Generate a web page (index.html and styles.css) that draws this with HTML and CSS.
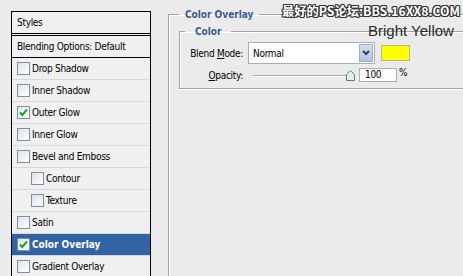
FILE: index.html
```html
<!DOCTYPE html>
<html lang="en">
<head>
    <meta charset="UTF-8">
    <title>Layer Style - Color Overlay</title>
    <link rel="stylesheet" href="styles.css">
</head>
<body>
    <div class="dialog">
        <!-- Styles list on the left -->
        <div class="styles-list">
            <div class="list-head">Styles</div>
            <div class="list-row blending">Blending Options: Default</div>
            <div class="list-row"><span class="check"></span>Drop Shadow</div>
            <div class="list-row"><span class="check"></span>Inner Shadow</div>
            <div class="list-row"><span class="check"><svg viewBox="0 0 11 11"><path d="M2 5.5 L4.3 8 L9 2.5" /></svg></span>Outer Glow</div>
            <div class="list-row"><span class="check"></span>Inner Glow</div>
            <div class="list-row"><span class="check"></span>Bevel and Emboss</div>
            <div class="list-row sub"><span class="check"></span>Contour</div>
            <div class="list-row sub"><span class="check"></span>Texture</div>
            <div class="list-row"><span class="check"></span>Satin</div>
            <div class="list-row selected"><span class="check"><svg viewBox="0 0 11 11"><path d="M2 5.5 L4.3 8 L9 2.5" /></svg></span>Color Overlay</div>
            <div class="list-row"><span class="check"></span>Gradient Overlay</div>
        </div>

        <!-- Settings pane -->
        <div class="settings">
            <fieldset class="group outer">
                <legend>Color Overlay</legend>
                <fieldset class="group inner">
                    <legend>Color</legend>
                    <div class="field-row">
                        <label class="field-label">Blend <u>M</u>ode:</label>
                        <div class="select">
                            <span class="select-value">Normal</span>
                            <span class="select-btn">
                                <svg viewBox="0 0 12 16"><path d="M3 6 L6 9 L9 6" /></svg>
                            </span>
                        </div>
                        <span class="swatch"></span>
                    </div>
                    <div class="field-row second">
                        <label class="field-label"><u>O</u>pacity:</label>
                        <div class="slider">
                            <span class="track"></span>
                            <svg class="thumb" viewBox="0 0 9 11"><path d="M4.5 0.5 L8.5 4.5 V10.5 H0.5 V4.5 Z" /></svg>
                        </div>
                        <span class="num">100</span>
                        <span class="unit">%</span>
                    </div>
                </fieldset>
            </fieldset>
        </div>
    </div>

    <div class="watermark">最好的PS论坛:BBS.16XX8.COM</div>
    <div class="note">Bright Yellow</div>
</body>
</html>
```

FILE: styles.css
```css
body {
    margin: 0;
    height: 276px;
    overflow: hidden;
    position: relative;
    background-color: #ebebeb;
    color: #000;
    font-family: "DejaVu Sans Condensed", "DejaVu Sans", sans-serif;
    font-size: 10px;
    letter-spacing: -0.3px;
}
.dialog {
    display: flex;
    align-items: flex-start;
    padding: 8px 0 0 11px;
}
.styles-list {
    flex: none;
    width: 138px;
    margin-top: 3px;
    border: 1px solid #000;
    background-color: #f0f0f0;
}
.list-head {
    height: 21px;
    line-height: 21px;
    padding-left: 5px;
    border-bottom: 3px double #000;
}
.list-row {
    display: flex;
    align-items: center;
    height: 21px;
    padding-left: 5px;
    border-bottom: 1px solid #dadada;
    white-space: nowrap;
}
.list-row.blending {
    border-bottom-color: #000;
}
.list-row.sub {
    padding-left: 19px;
}
.list-row.selected {
    background-color: #3163a5;
    color: #fff;
    font-weight: bold;
    letter-spacing: 0;
}
.check {
    flex: none;
    box-sizing: border-box;
    width: 13px;
    height: 13px;
    margin-right: 2px;
    border: 1px solid #7d8fa0;
    background: linear-gradient(135deg, #dde2e8, #ffffff);
}
.check svg {
    display: block;
    width: 11px;
    height: 11px;
}
.check path {
    fill: none;
    stroke: #21a121;
    stroke-width: 2;
}
.settings {
    flex: 1;
    margin-left: 17px;
}
.group {
    margin: 0;
    border: 1px solid #a3a3a3;
    box-shadow: inset 1px 1px #fff, 1px 1px #fff;
}
.group legend {
    font-weight: bold;
    color: #3b5b8d;
    line-height: 13px;
    letter-spacing: 0;
}
.group.outer {
    width: 400px;
    height: 300px;
    padding: 4px 0 0 10px;
}
.group.outer > legend {
    padding: 0 6px;
}
.group.inner {
    width: 380px;
    padding: 0 0 6px 5px;
}
.group.inner > legend {
    padding: 0 10px;
}
.field-row {
    display: flex;
    align-items: center;
    margin-top: 4px;
    white-space: nowrap;
}
.field-row.second {
    height: 14px;
    margin-top: 4px;
}
.field-label {
    width: 58px;
    margin-right: 5px;
    text-align: right;
}
.select {
    display: flex;
    justify-content: space-between;
    align-items: center;
    box-sizing: border-box;
    width: 127px;
    height: 22px;
    padding: 1px;
    border: 1px solid #a7aeb6;
    background-color: #fff;
}
.select-value {
    padding-left: 3px;
}
.select-btn {
    box-sizing: border-box;
    width: 14px;
    height: 18px;
    border: 1px solid #9aaecb;
    background: linear-gradient(#d5e0ef, #b2c4de);
}
.select-btn svg {
    display: block;
    width: 12px;
    height: 16px;
}
.select-btn path {
    fill: none;
    stroke: #2b3f63;
    stroke-width: 2;
}
.swatch {
    box-sizing: border-box;
    width: 29px;
    height: 16px;
    margin-left: 6px;
    border: 1px solid #b8b88a;
    background-color: #ffff00;
}
.slider {
    position: relative;
    width: 107px;
    height: 14px;
}
.track {
    position: absolute;
    left: 5px;
    right: 3px;
    top: 7px;
    height: 0;
    border-top: 1px solid #a9a9a9;
    border-bottom: 1px solid #fff;
}
.thumb {
    position: absolute;
    left: 98px;
    top: 2px;
    width: 9px;
    height: 11px;
}
.thumb path {
    fill: #e2f1e4;
    stroke: #5d7f67;
}
.num {
    box-sizing: border-box;
    width: 38px;
    height: 14px;
    margin-left: 4px;
    padding-left: 5px;
    line-height: 12px;
    border: 1px solid #a7aeb6;
    background-color: #fff;
}
.unit {
    margin-left: 2px;
    align-self: flex-start;
    margin-top: -1px;
}
.watermark {
    position: absolute;
    top: 3px;
    right: 3px;
    font-family: "Noto Sans CJK SC", sans-serif;
    font-size: 12.3px;
    font-weight: bold;
    line-height: 17px;
    letter-spacing: 0;
    color: #fff;
    text-shadow: 1px 0 #333, -1px 0 #333, 0 1px #333, 0 -1px #333, 1px 1px #333, -1px -1px #333, 1px -1px #333, -1px 1px #333;
}
.note {
    position: absolute;
    top: 22px;
    left: 368px;
    font-family: "Liberation Sans", Arial, sans-serif;
    font-size: 15px;
    line-height: 17px;
    letter-spacing: 0;
    color: #2a2a2a;
}
```
